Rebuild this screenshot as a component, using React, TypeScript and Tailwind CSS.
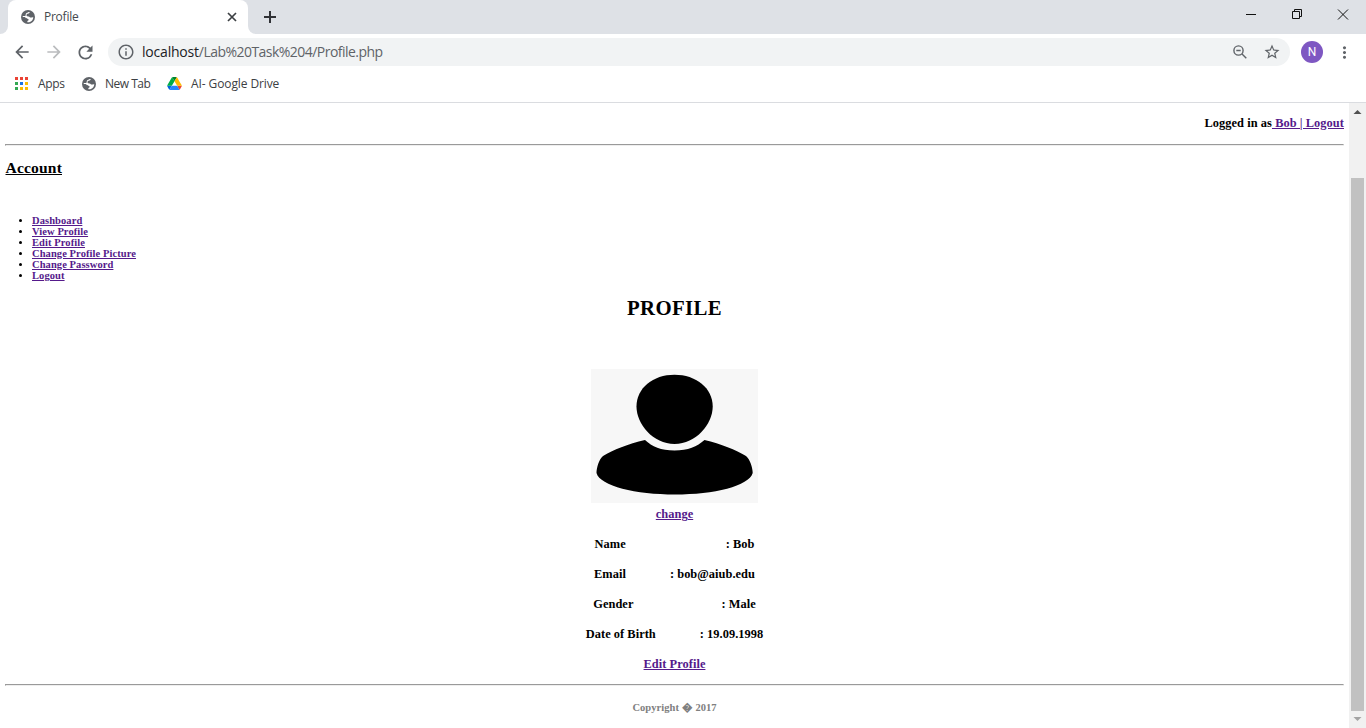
import type { ReactNode } from "react";
import {
  MdArrowBack,
  MdArrowForward,
  MdRefresh,
  MdInfoOutline,
  MdStarBorder,
  MdMoreVert,
} from "react-icons/md";

function Globe() {
  return (
    <svg viewBox="0 0 16 16" className="block size-4 shrink-0">
      <circle cx="8" cy="8" r="7" fill="#5f6368" />
      <path
        d="M10.200 3C9.200 3.300 9.500 4.300 8.600 4.500C7.300 4.700 6.300 5.300 6.500 6.400C6.700 7.300 7.900 7.200 8.700 7.500C9.500 7.800 9.700 8.500 10.600 8.600C11.600 8.700 12 8 13.300 8.200C13.200 10.400 11.900 12.300 9.900 13C9.200 13.200 8.400 13.300 7.300 13.200C7.400 12.500 7.300 12 7.800 11.700C8.600 11.300 8.900 10.400 8.200 9.900C7.400 9.300 6.300 9.700 5.700 8.900C5.100 8.100 4.200 8.200 2.700 8.100L2.800 7C4.200 6.900 5.300 7.200 5.600 6.400C5.900 5.500 5.500 4.800 6.600 4.100C7.400 3.600 8.400 2.800 10.200 3Z"
        fill="#fff"
      />
    </svg>
  );
}

const appColors = [
  "#ea4335", "#ea4335", "#ea4335",
  "#34a853", "#1a73e8", "#fbbc04",
  "#34a853", "#fbbc04", "#fbbc04",
];

function AppsGrid() {
  return (
    <svg viewBox="0 0 13 13" className="mb-px block size-[13px]" shapeRendering="crispEdges">
      {appColors.map((c, i) => (
        <rect key={i} x={(i % 3) * 5} y={Math.floor(i / 3) * 5} width="3" height="3" fill={c} />
      ))}
    </svg>
  );
}

function Drive() {
  return (
    <svg viewBox="0 0 87.3 78" className="mb-px block h-[13px] w-[15px]">
      <path d="m6.6 66.850 3.850 6.650c.8 1.400 1.950 2.500 3.300 3.300l13.750-23.800h-27.500c0 1.550.4 3.100 1.200 4.500z" fill="#0066da" />
      <path d="m43.650 25-13.750-23.800c-1.350.8-2.500 1.900-3.300 3.300l-25.400 44a9.060 9.060 0 0 0 -1.200 4.500h27.500z" fill="#00ac47" />
      <path d="m73.550 76.800c1.350-.8 2.500-1.900 3.300-3.300l1.600-2.750 7.650-13.250c.8-1.400 1.200-2.950 1.200-4.500h-27.502l5.852 11.500z" fill="#ea4335" />
      <path d="m43.650 25 13.750-23.800c-1.350-.8-2.900-1.200-4.500-1.200h-18.500c-1.600 0-3.150.45-4.500 1.200z" fill="#00832d" />
      <path d="m59.800 53h-32.300l-13.750 23.800c1.350.8 2.900 1.200 4.500 1.200h50.800c1.600 0 3.150-.45 4.500-1.200z" fill="#2684fc" />
      <path d="m73.400 26.500-12.700-22c-.8-1.400-1.950-2.500-3.300-3.300l-13.750 23.800 16.150 28h27.450c0-1.550-.4-3.100-1.200-4.500z" fill="#ffba00" />
    </svg>
  );
}

function TabStrip() {
  return (
    <div className="flex h-[34px] bg-[#dee1e6]">
      <div className="flex w-2 items-end bg-white">
        <div className="h-full w-2 rounded-br-[8px] bg-[#dee1e6]" />
      </div>
      <div className="h-full w-[240px] bg-[#dee1e6]">
        <div className="flex h-full items-center rounded-t-[8px] bg-white pl-3 pr-[9px]">
          <Globe />
          <span className="ml-2 flex-1 text-[12px] tracking-[-0.25px] text-[#45494d]">Profile</span>
          <svg viewBox="0 0 14 14" className="block size-[14px]" stroke="#3c4043" strokeWidth="1.700">
            <path d="m3 3 8 8m0-8-8 8" />
          </svg>
        </div>
      </div>
      <div className="w-2 bg-white">
        <div className="h-full w-2 rounded-bl-[8px] bg-[#dee1e6]" />
      </div>
      <div className="flex flex-1 items-center pl-[5px]">
        <svg viewBox="0 0 18 18" className="block size-[18px]" stroke="#303236" strokeWidth="2">
          <path d="M9 3v12M3 9h12" />
        </svg>
      </div>
      <svg viewBox="0 0 138 34" className="block h-[34px] w-[138px]" fill="none" stroke="#111">
        <path d="M18 14.500h10" />
        <path d="M64.500 11.500h7v7h-7zM66.500 11.500v-2h7v7h-2" />
        <path d="m110 9.500 10 10m0-10-10 10" />
      </svg>
    </div>
  );
}

function Toolbar() {
  return (
    <div className="flex h-9 items-center pl-[12px] text-[#5f6368]">
      <MdArrowBack className="size-5" />
      <MdArrowForward className="ml-3 size-5 text-[#babcbe]" />
      <MdRefresh className="ml-[11px] size-[21px]" />
      <div className="ml-[12px] flex h-7 w-[1182px] items-center rounded-full bg-[#f1f3f4] pl-[9px] pr-[9px]">
        <MdInfoOutline className="size-[18px]" />
        <span className="ml-[7px] flex-1 pb-px text-[14px] tracking-[-0.54px]">
          <span className="tracking-[-0.2px] text-[#202124]">localhost</span>/Lab%20Task%204/Profile.php
        </span>
        <svg viewBox="0 0 16 16" className="block size-4" fill="none" stroke="#5f6368" strokeWidth="1.400">
          <circle cx="6.500" cy="6.500" r="4.600" />
          <path d="m10 10 4.300 4.300M4.300 6.500h4.400" />
        </svg>
        <MdStarBorder className="ml-[15px] size-[18px]" />
      </div>
      <div className="ml-[11px] flex size-[22px] items-center justify-center rounded-full bg-[#7e57c2] font-['Roboto',sans-serif] text-[12px] text-white">
        N
      </div>
      <MdMoreVert className="ml-[12px] size-[19px]" />
    </div>
  );
}

function Bookmarks() {
  return (
    <div className="flex h-[33px] items-center border-b border-[#dadce0] pb-1 pl-[15px] text-[12px] text-[#3c4043]">
      <AppsGrid />
      <span className="ml-[10px] w-[43px] tracking-[-0.3px]">Apps</span>
      <Globe />
      <span className="ml-2 w-[62px] tracking-[-0.5px]">New Tab</span>
      <Drive />
      <span className="ml-[9px] tracking-[-0.1px]">AI- Google Drive</span>
    </div>
  );
}

function Link({ children }: { children: ReactNode }) {
  return <a className="text-[#551a8b] underline">{children}</a>;
}

function Rule() {
  return <div className="h-[2px] border border-b-[#eee] border-l-[#9a9a9a] border-r-[#eee] border-t-[#9a9a9a]" />;
}

const menu = ["Dashboard", "View Profile", "Edit Profile", "Change Profile Picture", "Change Password", "Logout"];

function Avatar() {
  return (
    <svg viewBox="0 0 167 134" className="mt-[43px] block h-[134px] w-[167px] bg-[#f7f7f7]">
      <path d="M83.500 5.800C105 5.800 121.700 19 121.700 37.500C121.700 55 105 75 83.500 75C62 75 45.500 55 45.500 37.500C45.500 19 62 5.800 83.500 5.800Z" />
      <path d="M54 71C61 77.500 70 81.500 83.500 81.500C97 81.500 106 77.500 113.500 71C130 75 145 81 155 87C159 90 161.700 99 161.700 104C158 117 123 125.500 84 125.500C45 125.500 9 117 5.500 104C5.500 99 8 90 12 87C22 81 37 75 54 71Z" />
    </svg>
  );
}

const fields = [
  { label: "Name", value: ": Bob", gap: "gap-[100px]" },
  { label: "Email", value: ": bob@aiub.edu", gap: "gap-[44px]" },
  { label: "Gender", value: ": Male", gap: "gap-[88px]" },
  { label: "Date of Birth", value: ": 19.09.1998", gap: "gap-[44px]" },
];

function Page() {
  return (
    <main className="flex-1 pl-[5px] pr-[5px] font-['Liberation_Serif',serif] text-[12.4px] font-bold tracking-[0.04px] text-black">
      <div className="flex h-[41px] items-center justify-end whitespace-pre pb-px tracking-[0.06px]">
        Logged in as<Link>{" Bob | Logout"}</Link>
      </div>
      <Rule />
      <h2 className="mt-[12px] h-[20px] pl-[0.5px] text-[15.6px] leading-[20px] tracking-[0.15px] underline">Account</h2>
      <ul className="mt-[37px] list-disc pl-[27px] text-[10.5px] leading-[11px] tracking-[0.08px]">
        {menu.map((m) => (
          <li key={m}>
            <Link>{m}</Link>
          </li>
        ))}
      </ul>
      <section className="flex flex-col items-center">
        <h1 className="mt-[15px] h-[30px] text-[20.8px] leading-[24px] tracking-[0.35px]">PROFILE</h1>
        <Avatar />
        <div className="flex h-[26px] items-center pb-[3px]">
          <Link>change</Link>
        </div>
        {fields.map((f) => (
          <div key={f.label} className={"flex h-[30px] items-center whitespace-pre pt-px " + f.gap}>
            <span>{f.label}</span>
            <span>{f.value}</span>
          </div>
        ))}
        <div className="flex h-[35px] items-center pb-[5px]">
          <Link>Edit Profile</Link>
        </div>
      </section>
      <Rule />
      <footer className="pt-[15px] text-center text-[10.5px] leading-[14px] tracking-[0.05px] text-[#808080]">
        Copyright {"\uFFFD"} 2017
      </footer>
    </main>
  );
}

function Scrollbar() {
  return (
    <div className="flex w-[17px] flex-col items-center bg-[#f1f1f1]">
      <svg viewBox="0 0 17 17" className="block size-[17px] shrink-0">
        <path d="M4.500 11h8l-4-4z" fill="#505050" />
      </svg>
      <div className="mt-[58px] h-[533px] w-[13px] bg-[#c1c1c1]" />
      <svg viewBox="0 0 17 17" className="block size-[17px] shrink-0">
        <path d="M4.500 6h8l-4 4z" fill="#a3a3a3" />
      </svg>
    </div>
  );
}

export default function App() {
  return (
    <div className="flex h-[728px] w-[1366px] flex-col overflow-hidden bg-white font-['Open_Sans',sans-serif]">
      <TabStrip />
      <Toolbar />
      <Bookmarks />
      <div className="flex h-[625px]">
        <Page />
        <Scrollbar />
      </div>
    </div>
  );
}
